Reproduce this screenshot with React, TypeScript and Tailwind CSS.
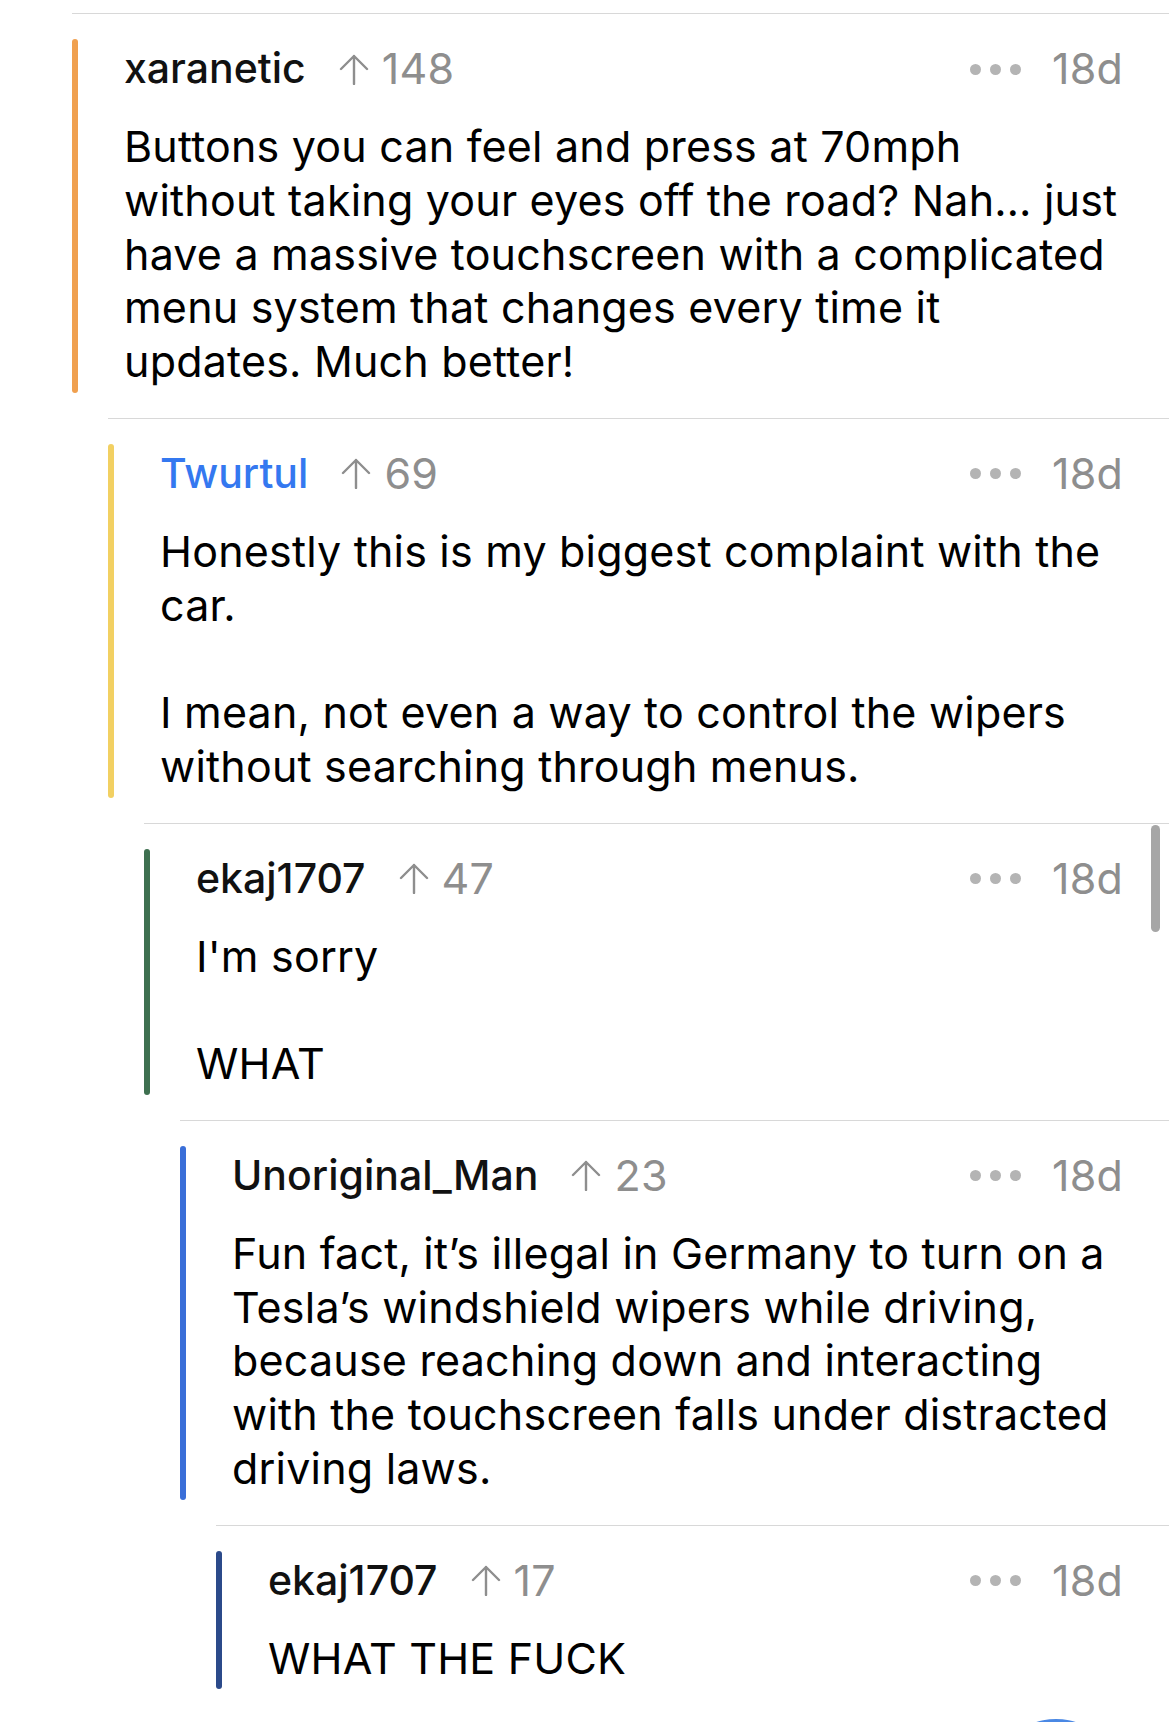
import React from "react";

type Reply = {
  user: string;
  score: number;
  age: string;
  lines: string[];
  bar: string;
  nameColor?: string;
};

const UpArrow = () => (
  <svg width="30" height="31" viewBox="0 0 30 31" fill="none" className="shrink-0">
    <path d="M15 30V2M2 15L15 2l13 13" stroke="#8e8e8e" strokeWidth="2.4" strokeLinecap="round" strokeLinejoin="round" />
  </svg>
);

const Dots = () => (
  <div className="flex items-center gap-[9px]">
    <span className="w-[11px] h-[11px] rounded-full bg-[#b4b4b4]" />
    <span className="w-[11px] h-[11px] rounded-full bg-[#b4b4b4]" />
    <span className="w-[11px] h-[11px] rounded-full bg-[#b4b4b4]" />
  </div>
);

const Comment = ({ c, tail }: { c: Reply; tail?: boolean }) => (
  <div className="border-t border-[#d8d8d8]">
    <div className={"flex pt-[25px] " + (tail ? "pb-[200px]" : "pb-[25px]")}>
      <div className={"w-[6px] shrink-0 rounded-full " + c.bar} />
      <div className="ml-[46px] flex-1 pr-[46px] pb-[4px]">
        {/* cabecera */}
        <div className="mt-[3px] flex h-[54px] items-center justify-between">
          <div className="flex items-center">
            <span className={"text-[41px] tracking-normal font-medium " + (c.nameColor ?? "text-[#111]")}>{c.user}</span>
            <span className="ml-[33px] mr-[13px] flex items-center">
              <UpArrow />
            </span>
            <span className="text-[#8e8e8e]">{c.score}</span>
          </div>
          <div className="flex items-center">
            <Dots />
            <span className="ml-[31px] text-[#8e8e8e]">{c.age}</span>
          </div>
        </div>
        <div className="mt-[24px] text-black">
          {c.lines.map((l, i) => (
            <div key={i} className="h-[53.75px] whitespace-nowrap">
              {l}
            </div>
          ))}
        </div>
      </div>
    </div>
  </div>
);

const comments: Reply[] = [
  {
    user: "xaranetic",
    score: 148,
    age: "18d",
    bar: "bg-[#f0a04f]",
    lines: [
      "Buttons you can feel and press at 70mph",
      "without taking your eyes off the road? Nah\u2026 just",
      "have a massive touchscreen with a complicated",
      "menu system that changes every time it",
      "updates. Much better!",
    ],
  },
  {
    user: "Twurtul",
    score: 69,
    age: "18d",
    bar: "bg-[#f2d062]",
    nameColor: "text-[#3478f0]",
    lines: [
      "Honestly this is my biggest complaint with the",
      "car.",
      "\u00a0",
      "I mean, not even a way to control the wipers",
      "without searching through menus.",
    ],
  },
  {
    user: "ekaj1707",
    score: 47,
    age: "18d",
    bar: "bg-[#3e7050]",
    lines: ["I'm sorry", "\u00a0", "WHAT"],
  },
  {
    user: "Unoriginal_Man",
    score: 23,
    age: "18d",
    bar: "bg-[#3a6ed8]",
    lines: [
      "Fun fact, it\u2019s illegal in Germany to turn on a",
      "Tesla\u2019s windshield wipers while driving,",
      "because reaching down and interacting",
      "with the touchscreen falls under distracted",
      "driving laws.",
    ],
  },
  {
    user: "ekaj1707",
    score: 17,
    age: "18d",
    bar: "bg-[#2b4a8a]",
    lines: ["WHAT THE FUCK"],
  },
];

export default function App() {
  return (
    <div className="relative w-[1169px] h-[1722px] overflow-hidden bg-white font-['Inter',sans-serif] text-[43px] leading-[53.75px] tracking-[0.2px]">
      <div className="pl-[72px] pt-[13px]">
        <Comment c={comments[0]} />
        <div className="pl-[36px]">
          <Comment c={comments[1]} />
          <div className="pl-[36px]">
            <Comment c={comments[2]} />
            <div className="pl-[36px]">
              <Comment c={comments[3]} />
              <div className="pl-[36px]">
                <Comment c={comments[4]} tail />
              </div>
            </div>
          </div>
        </div>
      </div>

      {/* barra de scroll */}
      <div className="absolute left-[1151px] top-[825px] w-[9px] h-[107px] rounded-full bg-[#a6a6a6]" />

      {/* botón flotante cortado */}
      <div className="absolute left-[990px] top-[1719px] w-[132px] h-[132px] rounded-full bg-[#4a88e4]" />
    </div>
  );
}
